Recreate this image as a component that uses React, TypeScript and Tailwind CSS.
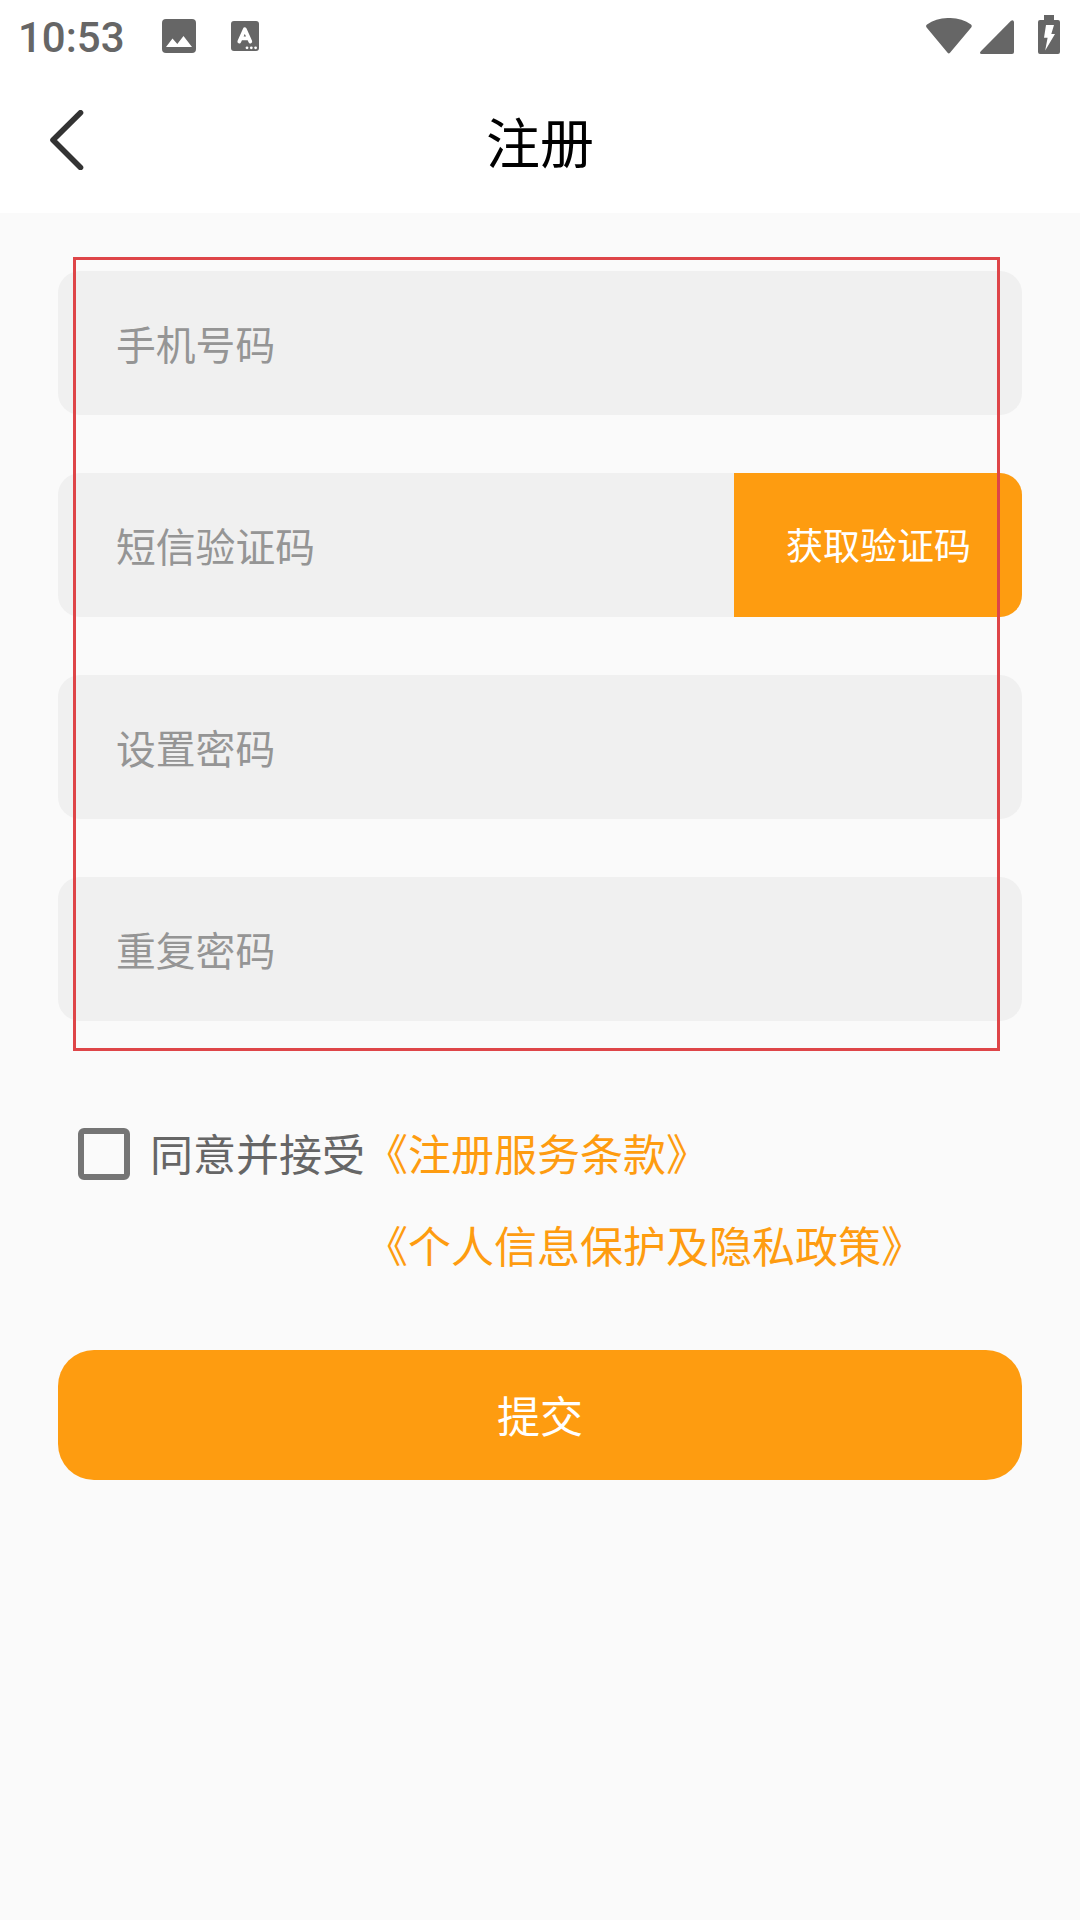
import React, { useState } from 'react';

interface FieldProps {
  label: string;
  type?: string;
  value: string;
  onChange: (value: string) => void;
  children?: React.ReactNode;
}

const StatusBar: React.FC = () => (
  <div className="h-[72px] pl-[18px] pr-5 flex items-center justify-between text-[#666666]">
    <div className="flex items-center">
      <span className="w-36 pt-[3px] font-[Roboto] font-medium text-[42px] leading-[50px]">10:53</span>
      <svg className="w-[34px] h-[34px]" viewBox="0 0 34 34" fill="currentColor">
        <rect width="34" height="34" rx="4" />
        <path d="M4 28 10.5 19.5 15.3 25 21.5 17 30 28z" fill="#fff" />
      </svg>
      <svg className="ml-[35px] w-7 h-[30px]" viewBox="0 0 28 30" fill="none">
        <rect width="28" height="30" rx="3" fill="currentColor" />
        <path d="M8.3 20.6 13.8 8.2 19.3 20.6M10.4 17.4h6.8" stroke="#fff" strokeWidth="3.8" strokeLinecap="round" strokeLinejoin="round" />
        <circle cx="16" cy="26.8" r="1.4" fill="#fff" />
        <circle cx="20.3" cy="26.8" r="1.4" fill="#fff" />
        <circle cx="24.6" cy="26.8" r="1.4" fill="#fff" />
      </svg>
    </div>
    <div className="flex items-end pb-[3px]">
      <svg className="w-[46px] h-9" viewBox="0 0 46 36" fill="currentColor">
        <path d="M1 6.5C13-2.2 33-2.2 45 6.5Q46.4 7.8 45.2 9.4L24 34.8Q22.8 36.4 21.6 34.8L.6 9.4Q-.6 7.8 1 6.5z" />
      </svg>
      <svg className="ml-2 w-[34px] h-[34px]" viewBox="0 0 34 34" fill="currentColor">
        <path d="M34 2v30q0 2-2 2H1.6Q-1 33.6.6 31.4L31 .8Q33.4-.8 34 2z" />
      </svg>
      <svg className="ml-6 w-[22px] h-[39px]" viewBox="0 0 22 39" fill="currentColor">
        <path d="M6 0h10v5h4q2 0 2 2v30q0 2-2 2H2q-2 0-2-2V7q0-2 2-2h4z" />
        <path d="M8 10h8l-2.7 9H17L7.2 35.5l2.4-12.8H6z" fill="#fff" />
      </svg>
    </div>
  </div>
);

const Field: React.FC<FieldProps> = ({ label, type = 'text', value, onChange, children }) => (
  <div className="h-36 flex rounded-[22px] overflow-hidden bg-[#f0f0f0]">
    <input
      type={type}
      value={value}
      onChange={e => onChange(e.target.value)}
      placeholder={label}
      className="flex-1 min-w-0 pl-[58px] pb-px outline-none bg-transparent text-[39.8px] text-[#333333] placeholder:text-[#959595]"
    />
    {children}
  </div>
);

const App: React.FC = () => {
  const [phone, setPhone] = useState('');
  const [code, setCode] = useState('');
  const [password, setPassword] = useState('');
  const [repeat, setRepeat] = useState('');
  const [agreed, setAgreed] = useState(false);

  return (
    <div className="w-[1080px] h-[1920px] bg-[#fafafa] font-['Noto_Sans_CJK_SC',sans-serif]">
      <header className="h-[213px] bg-white">
        <StatusBar />
        <div className="h-[141px] px-[50px] grid grid-cols-3 items-center">
          <button className="w-[34px] pb-[5px]" aria-label="返回">
            <svg className="w-[34px] h-[60px]" viewBox="0 0 34 60" fill="none" stroke="#333333" strokeWidth="5.6" strokeLinecap="round" strokeLinejoin="round">
              <path d="M30.5 2.8 3 30l27.5 27.5" />
            </svg>
          </button>
          <h1 className="pb-[3px] text-center text-[54px] leading-[80px] text-black">注册</h1>
        </div>
      </header>

      <main className="px-[58px] pt-[58px]">
        <section className="relative flex flex-col gap-[58px]">
          <Field label="手机号码" value={phone} onChange={setPhone} />
          <Field label="短信验证码" value={code} onChange={setCode}>
            <button className="w-72 pb-px pl-px bg-[#fe9c10] text-white text-[37px]">获取验证码</button>
          </Field>
          <Field label="设置密码" type="password" value={password} onChange={setPassword} />
          <Field label="重复密码" type="password" value={repeat} onChange={setRepeat} />
          <div className="absolute -top-[14px] -bottom-[30px] left-[15px] right-[22px] border-[3px] border-[#de4548] pointer-events-none"></div>
        </section>

        <section className="mt-[87px] pl-5 flex text-[43px]">
          <label className="flex items-center h-[92px] text-[#666666]">
            <input
              type="checkbox"
              checked={agreed}
              onChange={e => setAgreed(e.target.checked)}
              className="appearance-none w-[52px] h-[52px] border-[6px] border-[#757575] rounded-[6px] checked:bg-[#fe9c10]"
            />
            <span className="ml-5 pb-[4px] leading-[88px]">同意并接受</span>
          </label>
          <div className="flex flex-col text-[#fe9c10] leading-[88px]">
            <a className="pb-[4px]">《注册服务条款》</a>
            <a className="pb-[4px]">《个人信息保护及隐私政策》</a>
          </div>
        </section>

        <button className="mt-[58px] pb-[2px] w-full h-[130px] rounded-[36px] bg-[#fe9c10] text-white text-[43px]">提交</button>
      </main>
    </div>
  );
};

export default App;
